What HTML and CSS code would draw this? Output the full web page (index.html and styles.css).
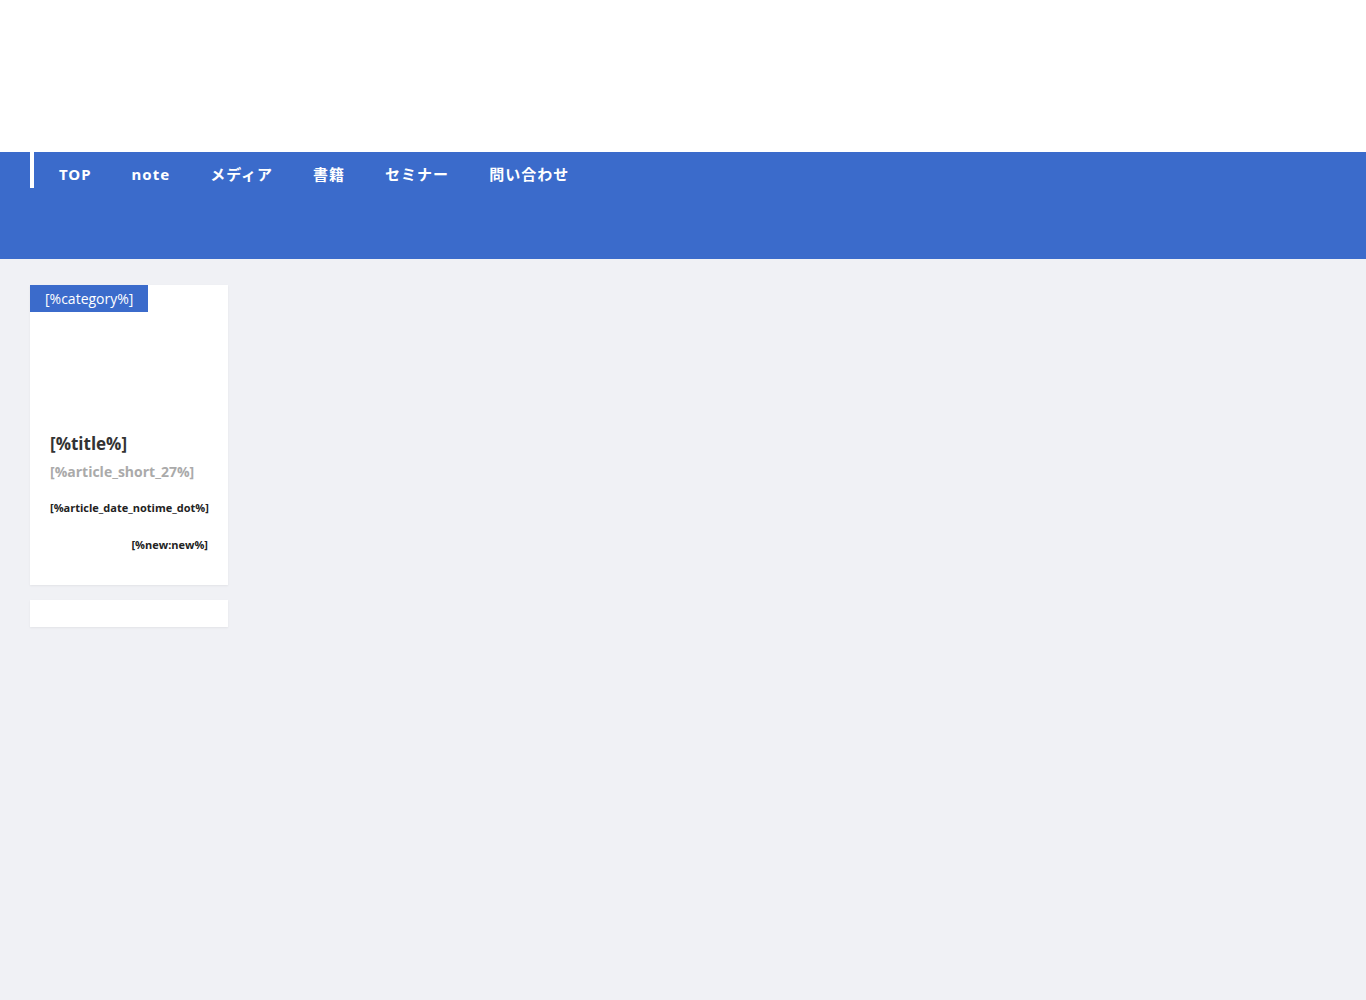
FILE: index.html
```html
<!DOCTYPE html>
<html lang="ja">
<head>
<meta charset="utf-8">
<title>page</title>
<link rel="stylesheet" href="styles.css">
</head>
<body>
<header class="site-header"></header>
<nav class="gnav">
  <ul class="gnav-list">
    <li class="gnav-item">TOP</li>
    <li class="gnav-item">note</li>
    <li class="gnav-item">メディア</li>
    <li class="gnav-item">書籍</li>
    <li class="gnav-item">セミナー</li>
    <li class="gnav-item">問い合わせ</li>
  </ul>
</nav>
<main class="content">
  <article class="card">
    <span class="card-cat">[%category%]</span>
    <div class="card-thumb"></div>
    <div class="card-body">
      <h2 class="card-title">[%title%]</h2>
      <p class="card-short">[%article_short_27%]</p>
      <p class="card-date">[%article_date_notime_dot%]</p>
      <p class="card-new">[%new:new%]</p>
    </div>
  </article>
  <div class="card card-empty"></div>
</main>
</body>
</html>
```
FILE: styles.css
```css
html, body {
  margin: 0;
  padding: 0;
}
body {
  background: #f0f1f5;
  font-family: "Open Sans", "Noto Sans", "Noto Sans CJK JP", sans-serif;
  color: #333;
  min-height: 1000px;
}
.site-header {
  height: 152px;
  background: #fff;
}
.gnav {
  background: #3b6bcb;
  height: 107px;
  padding-left: 30px;
}
.gnav-list {
  list-style: none;
  margin: 0;
  padding: 8px 0 0 5px;
  box-sizing: border-box;
  border-left: 4px solid #fff;
  height: 36px;
  display: flex;
  align-items: flex-start;
  width: max-content;
}
.gnav-item {
  color: #fff;
  font-weight: 700;
  font-size: 15px;
  line-height: 28px;
  padding: 0 20px;
  font-family: "Noto Sans", "Noto Sans CJK JP", sans-serif;
  letter-spacing: 1px;
}
.content {
  padding: 26px 30px;
  display: flex;
  flex-direction: column;
  gap: 15px;
}
.card {
  width: 198px;
  background: #fff;
  box-shadow: 0 1px 2px rgba(0,0,0,0.06);
  position: relative;
}
.card-cat {
  display: inline-block;
  background: #3b6bcb;
  color: #fff;
  font-size: 14px;
  line-height: 27px;
  padding: 0 15px;
}
.card-thumb {
  height: 121px;
}
.card-body {
  padding: 0 20px 33px;
}
.card-title {
  margin: 0;
  font-size: 17px;
  font-weight: 700;
  line-height: 22px;
  color: #333;
}
.card-short {
  margin: 6px 0 0;
  font-size: 14px;
  font-weight: 700;
  color: #aaa;
  line-height: 22px;
}
.card-date {
  margin: 18px 0 0;
  font-size: 11px;
  font-weight: 700;
  color: #222;
  line-height: 14px;
}
.card-new {
  margin: 23px 0 0;
  font-size: 11px;
  font-weight: 700;
  color: #222;
  line-height: 14px;
  text-align: right;
}
.card-empty {
  height: 27px;
}
```
